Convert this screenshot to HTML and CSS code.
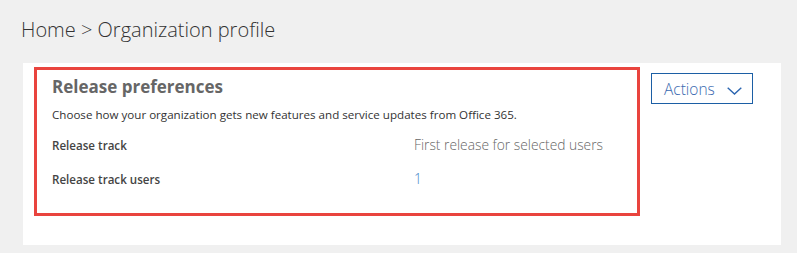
FILE: index.html
```html
<!DOCTYPE html>
<html lang="en">
<head>
  <meta charset="UTF-8">
  <meta name="viewport" content="width=device-width, initial-scale=1.0">
  <title>Organization profile</title>
  <link rel="stylesheet" href="styles.css">
</head>
<body>

  <header class="crumbs">
    <a href="#">Home</a> &gt; Organization profile
  </header>

  <main class="card">
    <section class="prefs">
      <h2>Release preferences</h2>
      <p class="desc">Choose how your organization gets new features and service updates from Office 365.</p>

      <div class="rows">
        <span class="label">Release track</span>
        <span class="value">First release for selected users</span>
        <span class="label">Release track users</span>
        <a class="value link" href="#">1</a>
      </div>
    </section>

    <button class="actions" type="button">
      Actions
      <svg width="15" height="8" viewBox="0 0 15 8">
        <path d="M0.7 0.7 L7.5 7 L14.3 0.7" fill="none" stroke="#2b65b0" stroke-width="1.4"/>
      </svg>
    </button>
  </main>

</body>
</html>
```

FILE: styles.css
```css
body {
  font-family: "Open Sans", "Noto Sans", sans-serif;
  background: #f0f0f0;
  margin: 0;
  padding: 0;
}
.crumbs {
  font-size: 20px;
  font-weight: 300;
  line-height: 28px;
  color: #333;
  padding: 16px 0 0 21px;
  height: 47px;
}
.crumbs a {
  color: #333;
  text-decoration: none;
}
.card {
  display: flex;
  align-items: flex-start;
  gap: 11px;
  background: #fff;
  margin-left: 23px;
  width: 758px;
  height: 182px;
  box-sizing: border-box;
  padding: 4px 0 0 11px;
}
.prefs {
  width: 606px;
  height: 149px;
  box-sizing: border-box;
  border: 3px solid #e9443e;
  padding: 6px 15px 0 15px;
}
.prefs h2 {
  margin: 0;
  font-size: 17px;
  line-height: 22px;
  font-weight: 700;
  color: #666;
}
.desc {
  margin: 9px 0 0;
  font-size: 11.6px;
  line-height: 16px;
  color: #333;
}
.rows {
  display: grid;
  grid-template-columns: 362px auto;
  row-gap: 13px;
  align-items: baseline;
  margin-top: 12px;
}
.label {
  font-size: 11.6px;
  line-height: 20px;
  font-weight: 600;
  color: #444;
}
.value {
  font-size: 13.8px;
  line-height: 20px;
  font-weight: 300;
  color: #666;
}
.link {
  color: #3d85c6;
  text-decoration: none;
}
.actions {
  display: flex;
  align-items: center;
  gap: 12px;
  margin-top: 6px;
  width: 102px;
  height: 31px;
  box-sizing: border-box;
  padding: 0 0 0 12px;
  border: 1px solid #1c5fa5;
  background: #fff;
  font-family: inherit;
  font-size: 15.5px;
  font-weight: 300;
  color: #3a6ab0;
  cursor: pointer;
}
.actions svg {
  margin-top: 4px;
}
```
